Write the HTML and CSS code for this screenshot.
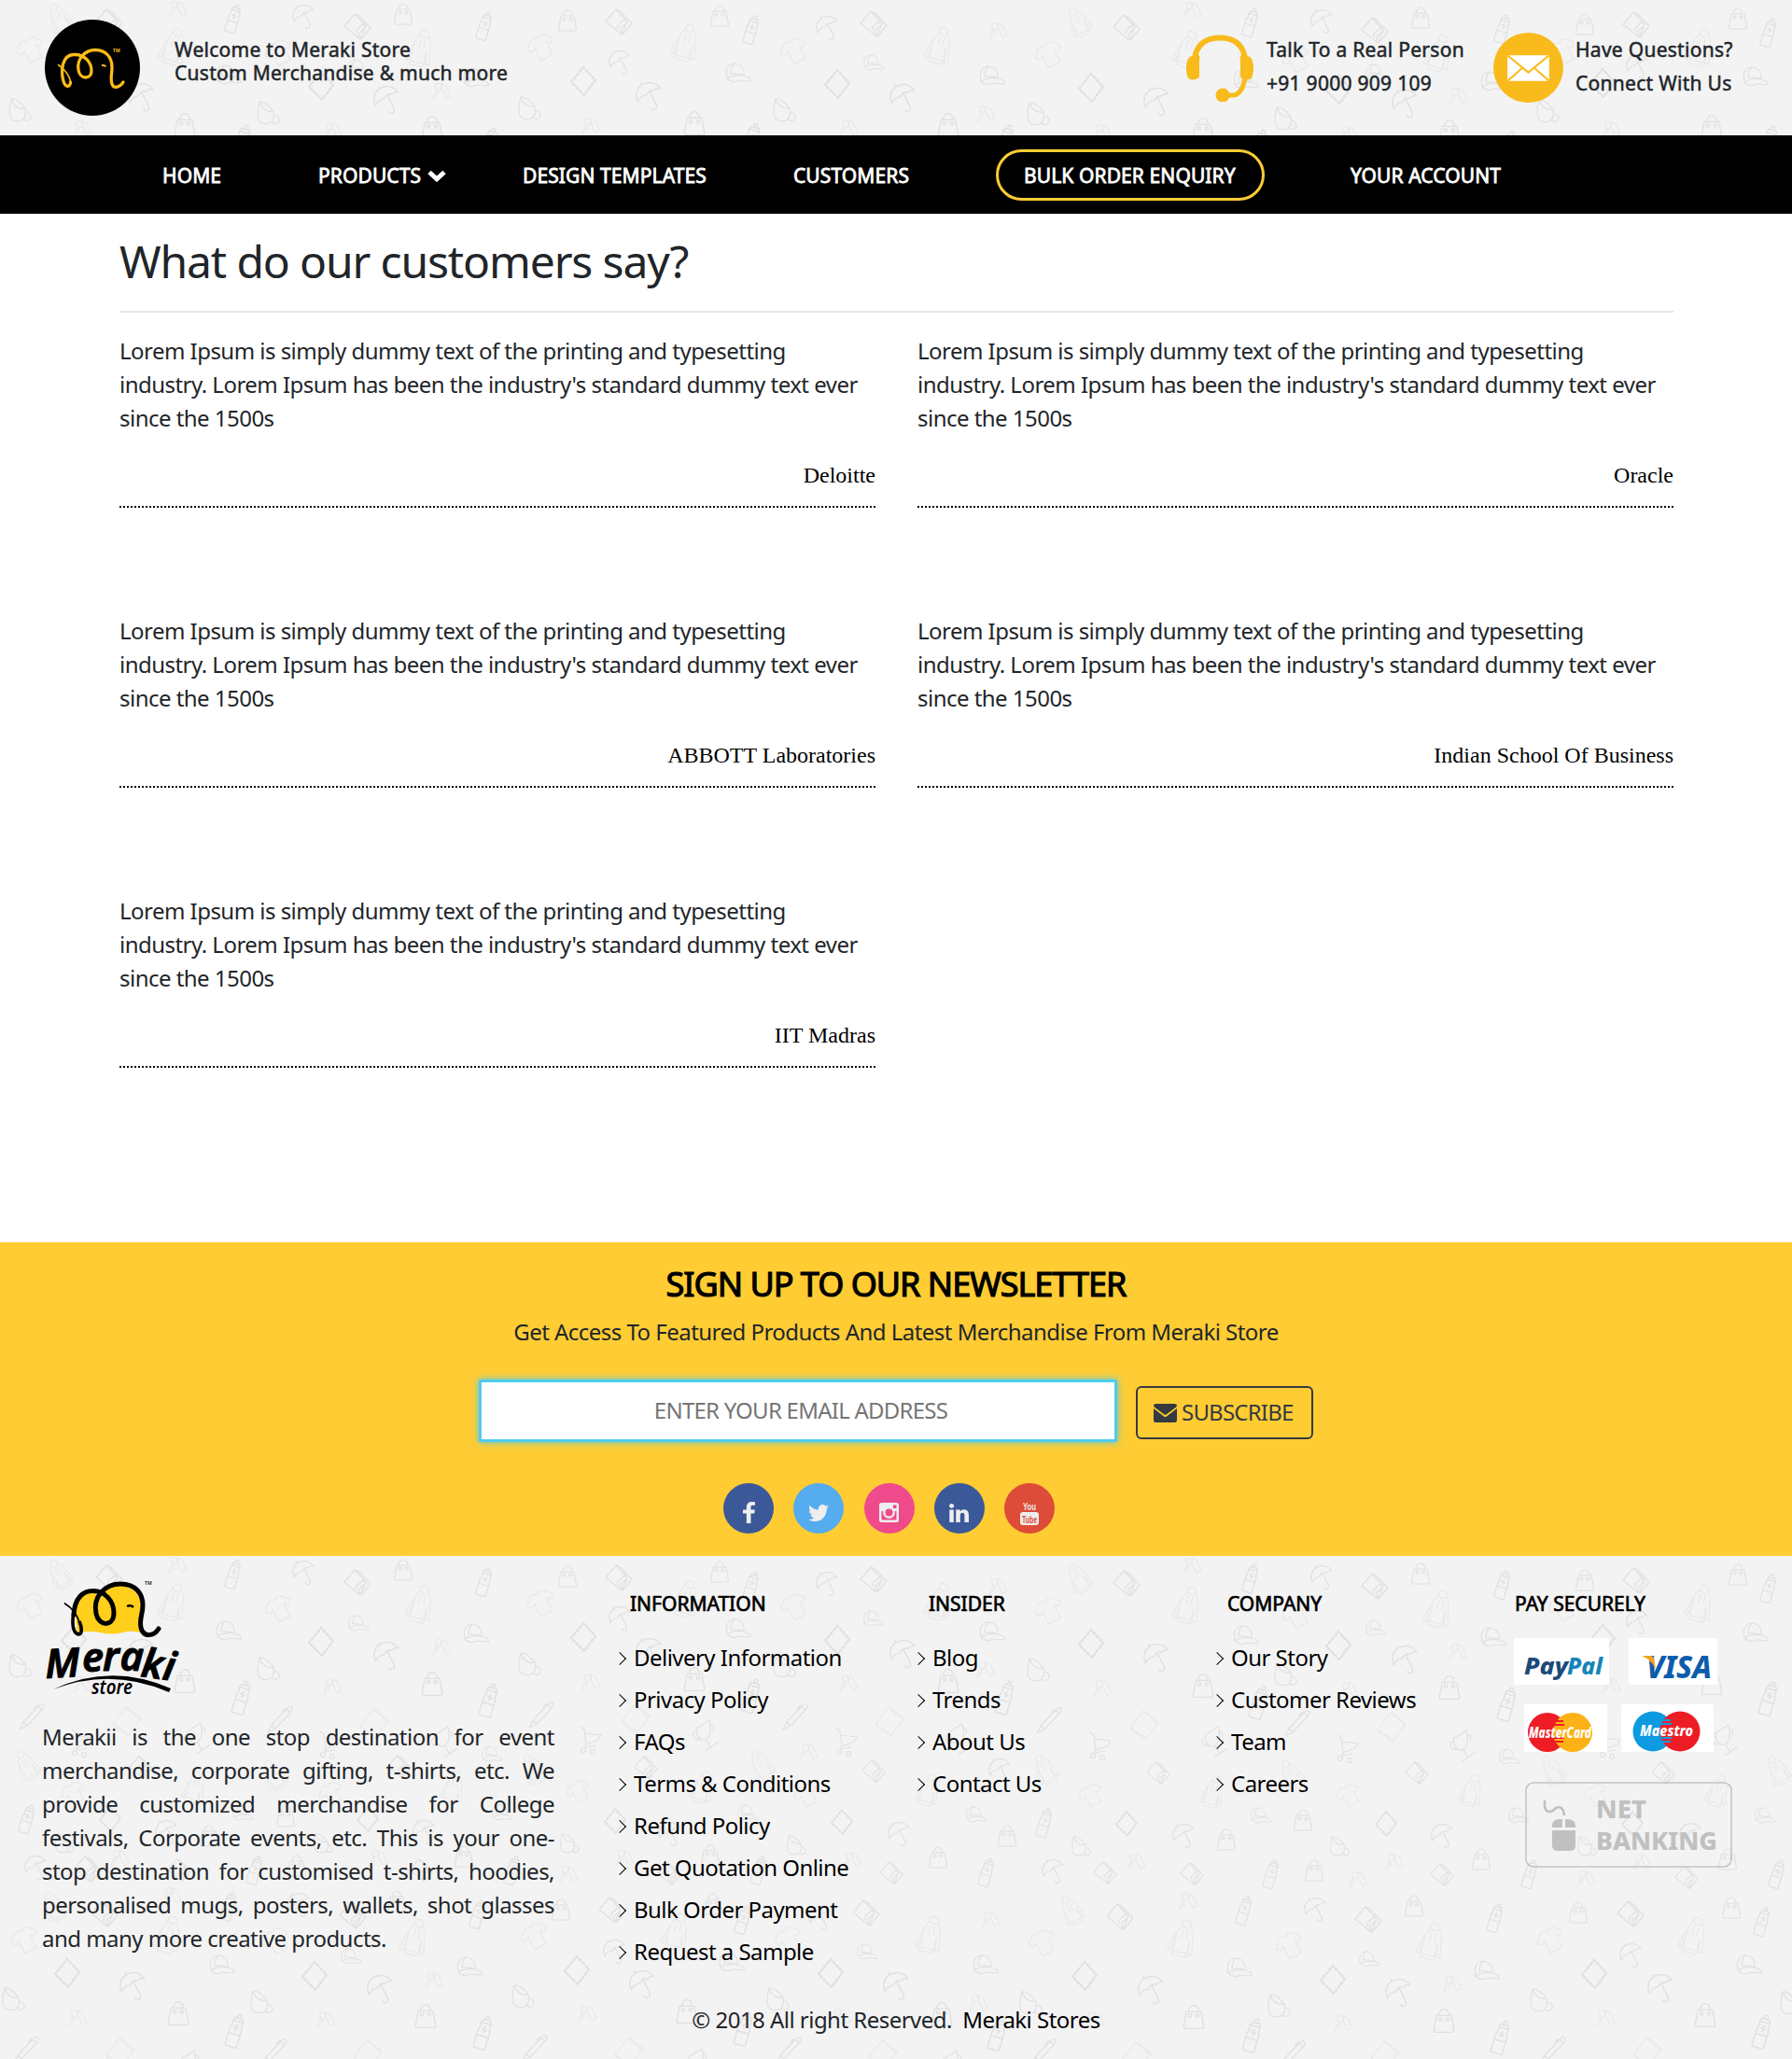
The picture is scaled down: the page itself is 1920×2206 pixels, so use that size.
FILE: index.html
```html
<!DOCTYPE html>
<html lang="en">
<head>
<meta charset="utf-8">
<title>Meraki Store - Customers</title>
<link rel="stylesheet" href="styles.css">
</head>
<body>
<svg class="defs" aria-hidden="true">
  <symbol id="bag" viewBox="-16 -16 32 32" overflow="visible"><path d="M-7 -5H7L9.500 9Q9.500 11 8 11H-8Q-9.500 11 -9.500 9ZM-5 -5Q-4 -11 0 -11T5 -5"/><circle cx="-3.500" cy="-1.500" r="1.500"/><circle cx="3.500" cy="-1.500" r="1.500"/></symbol>
  <symbol id="bottle" viewBox="-16 -16 32 32" overflow="visible"><g transform="rotate(17)"><path d="M-4.500 15Q-5.500 15 -5.500 13.500V3H5.500V13.500Q5.500 15 4.500 15ZM-5.500 3V-2Q-3.500 -5 -5 -9H5Q3.500 -5 5.500 -2V3M-4 -9V-12H4V-9M-1.500 -12V-15.500H1.500V-12M1 -6L-2 -3H2L-1 0"/></g></symbol>
  <symbol id="umbrella" viewBox="-16 -16 32 32" overflow="visible"><path d="M-10 5Q-14 -6 -5 -11Q5 -15 11 -7Q7 -8 5 -5Q0 -6 -2 -1Q-7 -1 -10 5ZM1 -4L7 8Q8 12 5 12.500Q3 13 2 10.500M-6 -10L-7 -12.500"/></symbol>
  <symbol id="wallet" viewBox="-16 -16 32 32" overflow="visible"><path d="M-14 -1L-3 -14L9 -1L3 13ZM-3 -14L1 -12.500L14 1L4 13M-1 7V3L6 -3L9 -1M2 12V6L8 1"/></symbol>
  <symbol id="hoodie" viewBox="-16 -16 32 32" overflow="visible"><g transform="rotate(14) translate(-1 1)"><path d="M-7 19V-6Q-5 -12 -3 -14Q-5 -20 1 -20T6 -14Q9 -12 10 -8L14 15L10 16L8 1V19ZM-7 -6L-13 14L-10 16L-7 5M-3 -14Q1 -10 6 -14M-1 -10V0M4 -10V0M-7 15H8"/></g></symbol>
  <symbol id="hoodie-l" viewBox="-16 -16 32 32" overflow="visible"><g transform="rotate(-30) scale(.88)"><path d="M-7 18V-6Q-5 -12 -3 -13Q-4 -19 1 -19T5 -13Q8 -12 9 -8L13 14L10 15L7 1V18ZM-7 -6L-13 13L-10 15L-7 5M-3 -13Q1 -8 5 -13M-1 -9V1M3 -9V1M-6 14H7"/></g></symbol>
  <symbol id="tee" viewBox="-16 -16 32 32" overflow="visible"><g transform="rotate(-27)"><path d="M-4 -12Q0 -8 4 -12L9 -10L15 -3L11 1L7 -2V13H-7V-2L-11 1L-15 -3L-9 -10Z"/></g></symbol>
  <symbol id="cap" viewBox="-16 -16 32 32" overflow="visible"><path d="M-12 6Q-15 -9 -4 -10Q7 -9 6 3Q-4 1 -12 6ZM-12 6Q-6 12 1 8L13 9Q15 5 6 3M-4 -10Q-8 -6 -8 1Q0 0 6 3"/></symbol>
  <symbol id="diamond" viewBox="-16 -16 32 32" overflow="visible"><path stroke-width="1.500" d="M-13 1L0 -15L13 -1L1 15Z"/><path stroke-width="3" stroke-dasharray="1.500 3.500" d="M-13 1L0 -15L13 -1L1 15Z"/></symbol>
  <symbol id="cup" viewBox="-16 -16 32 32" overflow="visible"><path d="M-9 -12Q-3 -13 6 -2Q8 8 2 11Q-11 14 -11 2Q-11 -5 -9 -12ZM-9 -12Q-5 0 6 -2M7 2Q13 4 12 9Q9 13 4 10"/></symbol>
  <symbol id="keys" viewBox="-16 -16 32 32" overflow="visible"><circle cx="-3" cy="-4" r="3.500"/><path d="M-5 -1L-9 9L-7 8M-3 0L-5 6M0 -7L5 -5L10 6L5 8L0 -2Z"/></symbol>
  <symbol id="pen" viewBox="-16 -16 32 32" overflow="visible"><path d="M-13 14L-9 6L7 -11Q10 -15 13 -12Q14 -10 11 -7L-5 10ZM7 -11L11 -7M-9 6L-5 10M2 -8L6 -12"/></symbol>
  <symbol id="notebook" viewBox="-16 -16 32 32" overflow="visible"><path d="M-15 3L-1 -15L15 -3L2 15Z"/><path stroke-width="3" stroke-dasharray="1.500 2" d="M-14 5L1 16M1 -14L15 -1"/></symbol>
  <symbol id="trophy" viewBox="-16 -16 32 32" overflow="visible"><path d="M-9 -6L5 -15Q9 0 1 6Q-8 8 -9 -6ZM-9 -3Q-15 -2 -11 4Q-8 7 -5 4M6 -10Q11 -11 9 -4M2 6L7 15M1 18L15 8"/></symbol>
  <symbol id="cart" viewBox="-16 -16 32 32" overflow="visible"><path d="M-11 -14L-7 -11L-5 5L8 0L11 -5L-6 -7M-5 5L-6 8L5 6"/><circle cx="-8" cy="11" r="2.500"/><circle cx="2" cy="13" r="2.500"/></symbol>
</svg>

<header class="topbar">
  <svg class="pattern" aria-hidden="true"></svg>
  <div class="brand">
    <svg class="brand-logo" viewBox="0 0 102 103">
      <ellipse cx="51" cy="51.500" rx="51" ry="51.500"/>
      <path fill="none" stroke="#fbbc16" stroke-width="3.300" stroke-linecap="round" d="M27.500 67C27.500 73 22 73 20 66C17 55 18 38 31 37.500C43 37 50 46 50 55C50 64 38 65 36 54C34 42 43 32.500 54 32.500C66 32.500 72 41 72 51C72 58 70 63 72 69C74 75 81 72 84 67"/>
      <path fill="none" stroke="#fbbc16" stroke-width="1.600" stroke-linecap="round" d="M14.500 48.500C20 52 27 60 27.500 67"/>
      <path fill="none" stroke="#fbbc16" stroke-width="2" d="M61 48.500L65.500 50"/>
      <text x="73" y="35" class="tm" fill="#fbbc16">TM</text>
    </svg>
    <p class="tagline">Welcome to Meraki Store<br>Custom Merchandise &amp; much more</p>
  </div>
  <div class="contact">
    <svg class="headset" viewBox="0 0 72 72" fill="#f8bb1b">
      <path fill="none" stroke="#f8bb1b" stroke-width="6" d="M9 26C11 10 22 3.500 36 3.500S61 10 63 26"/>
      <path fill="none" stroke="#f8bb1b" stroke-width="5" d="M63 44C62 58 56 65 50 65H39"/>
      <path d="M14 24Q0 19 0 36T12 47Q14 47 14 44ZM58 24Q72 19 72 36T60 47Q58 47 58 44Z"/><circle cx="39" cy="65" r="7.500"/><path d="M7 26L11 18L15 25ZM65 26L61 18L57 25Z"/>
    </svg>
    <p class="contact-text">Talk To a Real Person<br>+91 9000 909 109</p>
  </div>
  <div class="contact">
    <svg class="mail" viewBox="0 0 74 74"><circle cx="37" cy="37" r="37" fill="#f8bb1b"/><path fill="#fff" d="M15 24H59V51H15Z"/><path fill="none" stroke="#f8bb1b" stroke-width="2" d="M15 24L37 42L59 24M15 51L31 37M59 51L43 37"/></svg>
    <p class="contact-text">Have Questions?<br>Connect With Us</p>
  </div>
</header>

<nav class="nav">
  <a>HOME</a>
  <a>PRODUCTS <svg class="chev" viewBox="0 0 20 13"><path d="M2 2.500L10 9.800L18 2.500" fill="none" stroke="#fff" stroke-width="5"/></svg></a>
  <a>DESIGN TEMPLATES</a>
  <a>CUSTOMERS</a>
  <a class="pill">BULK ORDER ENQUIRY</a>
  <a>YOUR ACCOUNT</a>
</nav>

<main class="reviews">
  <h1>What do our customers say?</h1>
  <div class="grid">
    <article><p>Lorem Ipsum is simply dummy text of the printing and typesetting industry. Lorem Ipsum has been the industry's standard dummy text ever since the 1500s</p><cite>Deloitte</cite></article>
    <article><p>Lorem Ipsum is simply dummy text of the printing and typesetting industry. Lorem Ipsum has been the industry's standard dummy text ever since the 1500s</p><cite>Oracle</cite></article>
    <article><p>Lorem Ipsum is simply dummy text of the printing and typesetting industry. Lorem Ipsum has been the industry's standard dummy text ever since the 1500s</p><cite>ABBOTT Laboratories</cite></article>
    <article><p>Lorem Ipsum is simply dummy text of the printing and typesetting industry. Lorem Ipsum has been the industry's standard dummy text ever since the 1500s</p><cite>Indian School Of Business</cite></article>
    <article><p>Lorem Ipsum is simply dummy text of the printing and typesetting industry. Lorem Ipsum has been the industry's standard dummy text ever since the 1500s</p><cite>IIT Madras</cite></article>
  </div>
</main>

<section class="newsletter">
  <h2>SIGN UP TO OUR NEWSLETTER</h2>
  <p>Get Access To Featured Products And Latest Merchandise From Meraki Store</p>
  <form class="signup">
    <input type="text" placeholder="ENTER YOUR EMAIL ADDRESS">
    <button type="button"><svg class="env" viewBox="0 0 25 20" fill="#343a40"><path d="M0 5L11 13.500Q12.500 14.500 14 13.500L25 5V17.500Q25 20 22.500 20H2.500Q0 20 0 17.500ZM2.500 0H22.500Q25 0 25 2Q24.500 3.500 23 4.500L13.500 11.500Q12.500 12 11.500 11.500L2 4.500Q0 3 0 2Q0 0 2.500 0Z"/></svg><span>SUBSCRIBE</span></button>
  </form>
  <div class="social">
    <a class="fb"><svg width="13" height="23" viewBox="479 0 864 1664" preserveAspectRatio="none"><path d="M1343 12v264h-157q-86 0-116 36t-30 108v189h293l-39 296h-254v759h-306v-759h-255v-296h255v-218q0-186 104-288.500t277-102.500q147 0 228 12z"/></svg></a>
    <a class="tw"><svg width="22" height="18" viewBox="108 256 1576 1280"><path d="M1684 408q-67 98-162 167 1 14 1 42 0 130-38 259.500t-115.500 248.500-184.500 210.500-258 146-323 54.500q-271 0-496-145 35 4 78 4 225 0 401-138-105-2-188-64.500t-114-159.500q33 5 61 5 43 0 85-11-112-23-185.500-111.500t-73.500-205.500v-4q68 38 146 41-66-44-105-115t-39-154q0-88 44-163 121 149 294.500 238.500t371.500 99.500q-8-38-8-74 0-134 94.500-228.500t228.500-94.500q140 0 236 102 109-21 205-78-37 115-142 178 93-10 186-50z"/></svg></a>
    <a class="ig"><svg width="21" height="21" viewBox="0 0 21 21"><path fill-rule="evenodd" d="M2.500 0H18.500Q21 0 21 2.500V18.500Q21 21 18.500 21H2.500Q0 21 0 18.500V2.500Q0 0 2.500 0ZM2.500 9V17.500Q2.500 18.500 3.500 18.500H17.500Q18.500 18.500 18.500 17.500V9H16.700A6.400 6.400 0 1 1 4.300 9ZM15 2.500V6H18.500V2.500ZM10.500 6.500A4 4 0 1 0 10.500 14.500A4 4 0 1 0 10.500 6.500Z"/></svg></a>
    <a class="li"><svg width="21" height="20" viewBox="352 386 1075 1028"><path d="M365 1414h231v-694h-231v694zm246-908q-1-52-36-86t-93-34-94.500 34-36.500 86q0 51 35.500 85.500t92.500 34.500h1q59 0 95-34.500t36-85.500zm585 908h231v-398q0-154-73-233t-193-79q-136 0-209 117h2v-101h-231q3 66 0 694h231v-388q0-38 7-56 15-35 45-59.500t74-24.500q116 0 116 157v371z"/></svg></a>
    <a class="yt"><svg width="20" height="26" viewBox="0 0 20 26" overflow="visible"><text x="3" y="10" textLength="14" lengthAdjust="spacingAndGlyphs" class="yt-text" fill="#eee">You</text><rect y="12" width="20" height="14" rx="3"/><text x="2" y="23.500" textLength="16" lengthAdjust="spacingAndGlyphs" class="yt-text" fill="#dd4b39">Tube</text></svg></a>
  </div>
</section>

<footer class="footer">
  <svg class="pattern" aria-hidden="true"></svg>
  <div class="cols">
    <div class="about">
      <svg class="foot-logo" viewBox="0 0 146 128" overflow="visible">
        <path fill="#ffcf1b" d="M34 57L31 33Q34 17 49 14L57 17Q65 6 80 7Q98 8 102 26L101 44L104 58Q92 54 83 57Q70 60 58 57Q46 55 34 57Z"/>
        <path fill="none" stroke="#000" stroke-width="5" stroke-linecap="round" d="M30 38C31 20 40 12.500 50 12.500C64 12 73 24 73 36C73 51 57 51 54 37C50 18 64 5 80 5C97 5 104 16 104 28C104 37 100 43 102 52C105 63 116 61 121 53"/>
        <path fill="none" stroke="#000" stroke-width="3.600" d="M30 34C27 53 31 59 36 59C39 58 39 52 36 45"/>
        <path fill="none" stroke="#000" stroke-width="1.800" stroke-linecap="round" d="M37 49C34 38 29 31 20.500 26"/>
        <path fill="none" stroke="#000" stroke-width="2.500" d="M87 29Q91 27 94 30"/>
        <text x="106" y="6" class="tm" fill="#333">TM</text>
        <text class="script" x="0 39 61 79 101 124" y="106 99 98 97 104 107" rotate="-3 0 0 3 8 10">Meraki</text>
        <path d="M8 118Q70 89 134 117L132 121Q70 94 8 118Z"/>
        <text class="script small" x="49" y="123" textLength="44" lengthAdjust="spacingAndGlyphs">store</text>
      </svg>
      <p>Merakii is the one stop destination for event merchandise, corporate gifting, t-shirts, etc. We provide customized merchandise for College festivals, Corporate events, etc. This is your one-stop destination for customised t-shirts, hoodies, personalised mugs, posters, wallets, shot glasses and many more creative products.</p>
    </div>
    <div class="links"><h3>INFORMATION</h3>
      <ul><li>Delivery Information</li><li>Privacy Policy</li><li>FAQs</li><li>Terms &amp; Conditions</li><li>Refund Policy</li><li>Get Quotation Online</li><li>Bulk Order Payment</li><li>Request a Sample</li></ul></div>
    <div class="links"><h3>INSIDER</h3>
      <ul><li>Blog</li><li>Trends</li><li>About Us</li><li>Contact Us</li></ul></div>
    <div class="links"><h3>COMPANY</h3>
      <ul><li>Our Story</li><li>Customer Reviews</li><li>Team</li><li>Careers</li></ul></div>
    <div class="pay"><h3>PAY SECURELY</h3>
      <div class="pay-row">
        <svg width="102" height="50" viewBox="0 0 102 50"><path fill="#fff" d="M0 0H102V50H0Z"/><text class="card-text" x="11" y="39" font-size="25" textLength="47" lengthAdjust="spacingAndGlyphs" fill="#1b4a7b">Pay</text><text class="card-text" x="57" y="39" font-size="25" textLength="38" lengthAdjust="spacingAndGlyphs" fill="#1583b8">Pal</text></svg>
        <svg width="95" height="50" viewBox="0 0 95 50"><path fill="#fff" d="M0 0H95V50H0Z"/><text class="card-text" x="19" y="43" font-size="33" textLength="70" lengthAdjust="spacingAndGlyphs" fill="#0d5cab">VISA</text><path fill="#f9a01b" d="M14 19H23Q26 19 27 22L29 33Q24 23 14 19Z"/></svg>
      </div>
      <div class="pay-row second">
        <svg width="89" height="51" viewBox="0 0 89 51"><path fill="#fff" d="M0 0H89V51H0Z"/><circle cx="25" cy="30" r="21" fill="#ee1c25"/><circle cx="52" cy="30" r="21" fill="#fcb116"/><path stroke="#ee1c25" stroke-width="2" d="M33 18H42M32 22H43M32 36H43M33 40H42"/><text class="card-text" x="5" y="36" font-size="16" textLength="67" lengthAdjust="spacingAndGlyphs" fill="#fff">MasterCard</text></svg>
        <svg width="99" height="51" viewBox="0 0 99 51"><path fill="#fff" d="M0 0H99V51H0Z"/><circle cx="34" cy="29" r="21.500" fill="#0d9ae0"/><circle cx="63" cy="29" r="21.500" fill="#ee1c25"/><path stroke="#0d9ae0" stroke-width="2" d="M44 17H53M43 21H54M43 36H54M44 40H53"/><text class="card-text" x="20" y="34" font-size="16" textLength="57" lengthAdjust="spacingAndGlyphs" fill="#fff">Maestro</text></svg>
      </div>
      <svg class="netbank" width="223" height="92" viewBox="0 0 223 92" fill="#bbb">
        <rect x="1" y="1" width="220" height="90" rx="8" fill="none" stroke="#c0c0c0" stroke-width="1.600"/>
        <path fill="none" stroke="#bbb" stroke-width="2.500" d="M21 20Q20 33 27 32Q31 31 33 28Q41 25 42 36"/>
        <path d="M29 49V47Q29 40 38 40H40V49ZM43 49V40H45Q54 40 54 47V49ZM29 52H54V68Q54 74 48 74H35Q29 74 29 68Z"/>
        <text class="net" x="76" y="39" textLength="54" lengthAdjust="spacingAndGlyphs">NET</text>
        <text class="net" x="76" y="73" textLength="130" lengthAdjust="spacingAndGlyphs">BANKING</text>
      </svg>
    </div>
  </div>
  <p class="copy">© 2018 All right Reserved.&nbsp; <a>Meraki Stores</a></p>
</footer>
<script src="pattern.js"></script>
</body>
</html>
```
FILE: styles.css
```css
* { box-sizing: border-box; }
body { margin: 0; background: #fff; color: #212529; font-family: "Noto Sans", "Open Sans", sans-serif; font-size: 24px; line-height: 36px; letter-spacing: -.53px; }
p, h1, h2, h3, ul { margin: 0; padding: 0; font-weight: 400; }
svg { display: block; flex: none; letter-spacing: 0; }
.defs { position: absolute; width: 0; height: 0; }
.pattern { position: absolute; inset: 0; width: 100%; height: 100%; fill: none; stroke: #e0e0e0; stroke-width: 1.2; stroke-linejoin: round; z-index: -1; }
.pattern .faint { stroke: #e8e8e8; }

.topbar { position: relative; z-index: 0; overflow: hidden; height: 145px; background: #f3f3f3; display: flex; align-items: center; padding: 0 65px 0 48px; }
.brand { display: flex; align-items: center; margin-right: auto; }
.brand-logo { width: 102px; height: 103px; }
.tm { font-size: 5px; font-weight: 700; }
.tagline, .contact-text { font-size: 21px; letter-spacing: .28px; -webkit-text-stroke: .5px #212529; white-space: nowrap; }
.tagline { margin: -14px 0 0 37px; line-height: 25px; }
.contact { display: flex; align-items: center; }
.contact-text { width: 212px; margin: -3px 0 0 14px; }
.contact + .contact { margin-left: 31px; }
.contact + .contact .contact-text { width: 167px; margin-left: 13px; }
.headset { width: 72px; height: 72px; }
.mail { width: 75px; height: 75px; }

.nav { height: 84px; background: #000; display: grid; grid-template-columns: 167px 219px 290px 217px 380px auto; align-items: center; padding-left: 174px; }
.nav a { display: flex; align-items: center; gap: 7px; color: #fff; font-size: 21px; letter-spacing: .1px; -webkit-text-stroke: .8px #fff; white-space: nowrap; padding-top: 1px; }
.chev { width: 20px; height: 13px; margin-top: 2px; }
.nav .pill { width: 288px; height: 55px; border: 3px solid #ffcc33; border-radius: 28px; padding-left: 27px; }

.reviews { height: 1102px; padding: 22px 127px 0 128px; }
.reviews h1 { font-size: 48px; line-height: 58px; letter-spacing: -1.13px; padding-bottom: 24px; border-bottom: 2px solid #e5e5e5; margin-bottom: 23px; }
.grid { display: grid; grid-template-columns: 810px 810px; column-gap: 45px; grid-auto-rows: 300px; }
.grid article { height: 186px; border-bottom: 2px dotted #000; }
.grid p { height: 133px; }
.grid cite { display: block; text-align: right; font: 24px/36px "Liberation Serif", serif; letter-spacing: 0; color: #000; }

.newsletter { height: 336px; background: #ffcc33; padding-top: 23px; text-align: center; }
.newsletter h2 { font-size: 36px; line-height: 44px; letter-spacing: -1px; color: #000; -webkit-text-stroke: 1.2px #000; margin-bottom: 11px; }
.signup { display: flex; justify-content: center; align-items: flex-start; gap: 20px; margin-top: 33px; }
.signup input { width: 684px; height: 67px; border: 3px solid #50cbee; box-shadow: 0 0 8px #50cbee; background: #fff; text-align: center; font: inherit; letter-spacing: -.75px; padding: 0 0 2px 6px; outline: 0; }
.signup input::placeholder { color: #757575; }
.signup button { width: 190px; height: 57px; margin-top: 7px; background: none; border: 2px solid #343a40; border-radius: 6px; padding: 0 0 0 17px; display: flex; align-items: center; gap: 5px; font: inherit; letter-spacing: -.8px; color: #343a40; }
.signup button span { margin-top: -2px; }
.env { width: 25px; height: 20px; }
.social { display: flex; gap: 21.300px; margin: 44px 0 0 775px; }
.social a { width: 54px; height: 54px; border-radius: 50%; display: flex; align-items: center; justify-content: center; padding-top: 9px; fill: #eee; }
.fb, .li { background: #3b5998; }
.tw { background: #55acee; }
.ig { background: #ef4a8b; }
.yt { background: #dd4b39; }
.yt-text { font: 700 11px "Liberation Sans", sans-serif; }

.footer { position: relative; z-index: 0; overflow: hidden; height: 539px; background: #f3f3f3; }
.cols { display: grid; grid-template-columns: 549px 320px 320px 307px 240px; padding-left: 45px; height: 480px; }
.about { padding-top: 25px; }
.foot-logo { width: 146px; height: 128px; margin-left: 4px; }
.about p { margin-top: 23px; text-align: justify; }
.script { font: italic 600 43px "Noto Sans", sans-serif; stroke: #000; stroke-width: 1; stroke-linejoin: round; }
.script.small { font-size: 22px; stroke-width: 0; }
.cols h3 { font-size: 21px; line-height: 26px; letter-spacing: 0; color: #000; -webkit-text-stroke: .7px #000; padding: 38px 0 0 12px; }
.links { padding-left: 69px; }
.links ul { list-style: none; margin-top: 22px; color: #000; white-space: nowrap; }
.links li { height: 45px; display: flex; align-items: center; line-height: 45px; }
.links li::before { content: ""; flex: none; width: 9px; height: 9px; border: solid #000; border-width: 1.500px 1.500px 0 0; transform: rotate(45deg); margin: 2px 10px 0 -4px; }
.pay { padding-left: 82px; }
.pay h3 { padding-left: 0; }
.pay-row { display: flex; gap: 21px; margin: 24px 0 0 -1px; }
.pay-row.second { gap: 15px; margin: 21px 0 0 10px; }
.card-text { font-family: "Noto Sans", sans-serif; font-style: italic; font-weight: 800; }
.netbank { margin: 32px 0 0 11px; opacity: .9; }
.net { font: 800 27px "Noto Sans", sans-serif; }
.copy { text-align: center; margin-top: -1px; }
.copy a { color: #000; }
```
FILE: pattern.js
```js
// Centres of the merchandise icons: [symbol, scale, "x,y" pairs].
const ICONS = [
  ["keys", 1, "190,9 473,97 88,137 356,139 633,134 128,323 405,323 609,340 184,363 465,454 83,494 349,496 629,490 1069,32 1277,10 1056,121 909,136 1181,141 866,209 669,323 913,325 1217,327 1061,389 1273,369 1048,478 901,493 1173,496 1562,102 1445,143 1726,138 1494,327 1759,327 1455,346 1699,345 1556,458 1439,500 1720,494"],
  ["bottle", 1, "250,20 519,28 29,282 273,337 549,337 245,376 512,384 805,32 1119,286 813,337 1057,339 796,390 1340,24 1610,31 1895,35 1362,341 1639,341 1904,341 1333,380 1602,388 1888,392"],
  ["bottle", 1.17, "259,152 524,155 252,509 518,511 805,150 1077,152 797,507 1069,512 1349,157 1615,159 1895,153 1342,514 1608,516 1888,510"],
  ["umbrella", 1, "325,18 178,296 454,296 38,334 320,374 886,30 664,67 1071,230 717,298 963,298 1268,300 1128,338 878,388 658,424 1416,23 1754,71 1545,300 1811,299 1409,379 1747,428"],
  ["umbrella", 1.17, "414,107 151,104 142,461 407,464 695,103 967,105 1239,109 688,459 960,461 1233,465 1505,111 1498,468 1779,463"],
  ["wallet", 1, "117,24 383,29 94,336 112,384 378,386 663,24 936,26 1207,30 656,380 928,383 1200,387 1473,33 1753,27 1466,390 1747,384"],
  ["wallet", 0.87, "151,227 428,226 192,337 451,337 692,227 936,231 1241,233 717,341 955,340 1184,340 1277,341 1518,233 1782,233 1545,342 1807,345"],
  ["bag", 1, "432,15 608,22 306,279 224,300 497,322 318,332 425,370 601,379 771,17 1079,300 761,321 1005,323 764,373 1522,19 1698,26 1862,20 1396,283 1314,304 1587,325 1851,325 1408,337 1515,375 1691,382 1855,377"],
  ["bag", 1.13, "198,134 463,137 191,490 456,493 744,132 1016,134 736,488 1009,491 1279,494 1289,139 1553,141 1834,136 1547,498 1827,492"],
  ["hoodie", 1, "186,49 451,51 181,405 445,408 735,45 1007,48 1273,52 725,402 997,405 1268,409 1542,56 1822,50 1534,412 1815,406"],
  ["hoodie", 0.87, "209,247 486,247 753,247 995,250 1300,252 1577,251 1841,251"],
  ["hoodie-l", 1, "63,20 28,225 293,235 571,229 57,376 1155,24 815,225 1119,229 1147,380 1383,235 1663,230 1904,230"],
  ["tee", 1, "33,53 299,56 580,50 27,411 296,412 573,407 851,54 1124,58 845,411 1117,414 1389,63 1674,55 1382,417 1662,411"],
  ["tee", 0.87, "79,254 355,254 620,252 864,256 1169,256 1445,256 1710,256"],
  ["cap", 1, "245,80 510,83 238,438 503,440 791,78 1063,81 784,435 1056,438 1335,85 1600,87 1881,82 1328,441 1593,444 1874,438"],
  ["cap", 0.82, "384,72 527,212 260,275 538,275 376,429 936,67 801,275 1046,277 929,424 1474,77 1617,215 1351,278 1627,278 1891,278 1467,432"],
  ["diamond", 1, "344,92 625,87 79,90 72,447 337,450 618,444 897,90 1169,94 890,447 1162,450 1434,96 1717,89 1428,454 1708,448"],
  ["diamond", 0.85, "118,282 394,282 659,284 902,285 1207,287 1485,287 1749,287"],
  ["cup", 1, "21,118 287,121 567,116 14,475 280,478 560,472 840,118 1112,122 833,475 1104,479 1377,127 1658,119 1370,482 1651,476 1919,479"],
  ["cup", 0.85, "69,308 346,308 610,308 853,310 1158,311 1435,311 1700,311"],
  ["pen", 1, "34,172 300,175 580,170 28,529 294,531 573,527 852,172 1124,176 845,529 1118,531 1390,179 1385,533 1664,529"],
  ["notebook", 1, "136,177 401,179 129,532 394,534 681,174 953,177 1226,181 674,531 946,534 1218,536 1491,183 1484,535 1765,531"],
  ["trophy", 1, "210,194 475,198 203,545 755,191 1026,195 747,543 1020,545 1300,198 1566,202 1847,196"],
  ["cart", 1, "88,200 354,202 633,197 907,199 1179,203 1444,206 1725,202"]
];
const FAINT = ["hoodie", "hoodie-l", "tee", "keys", "notebook"];

document.querySelectorAll(".pattern").forEach(svg => {
  svg.innerHTML = ICONS.map(([id, scale, points]) => points.split(" ").map(p => {
    const [x, y] = p.split(",").map(Number);
    const size = 32 * scale;
    const cls = FAINT.includes(id) ? ' class="faint"' : "";
    return `<use href="#${id}"${cls} x="${x - size / 2}" y="${y - size / 2}" width="${size}" height="${size}"/>`;
  }).join("")).join("");
});
```
